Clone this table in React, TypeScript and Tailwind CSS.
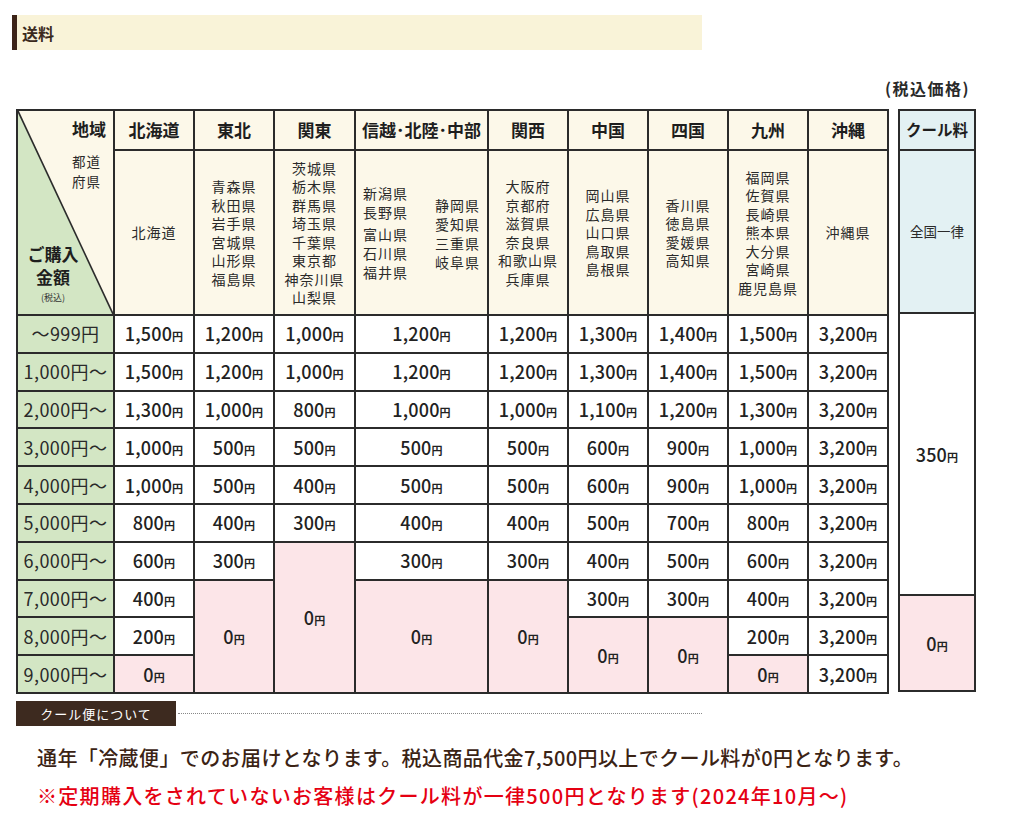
import React from 'react'

type Seg = { v: string; span?: number; pink?: boolean }

const rowLabels = ['～999円', '1,000円～', '2,000円～', '3,000円～', '4,000円～', '5,000円～', '6,000円～', '7,000円～', '8,000円～', '9,000円～']

const regions = ['北海道', '東北', '関東', '信越･北陸･中部', '関西', '中国', '四国', '九州', '沖縄']

const colWidths = ['w-[80px]', 'w-[80px]', 'w-[81px]', 'w-[133px]', 'w-[80px]', 'w-[80px]', 'w-[80px]', 'w-[80px]', 'w-[80px]']

const s = (list: string[]): Seg[] => list.map((v) => ({ v }))

const prices: Seg[][] = [
    [...s(['1,500', '1,500', '1,300', '1,000', '1,000', '800', '600', '400', '200']), { v: '0', pink: true }],
    [...s(['1,200', '1,200', '1,000', '500', '500', '400', '300']), { v: '0', span: 3, pink: true }],
    [...s(['1,000', '1,000', '800', '500', '400', '300']), { v: '0', span: 4, pink: true }],
    [...s(['1,200', '1,200', '1,000', '500', '500', '400', '300']), { v: '0', span: 3, pink: true }],
    [...s(['1,200', '1,200', '1,000', '500', '500', '400', '300']), { v: '0', span: 3, pink: true }],
    [...s(['1,300', '1,300', '1,100', '600', '600', '500', '400', '300']), { v: '0', span: 2, pink: true }],
    [...s(['1,400', '1,400', '1,200', '900', '900', '700', '500', '300']), { v: '0', span: 2, pink: true }],
    [...s(['1,500', '1,500', '1,300', '1,000', '1,000', '800', '600', '400', '200']), { v: '0', pink: true }],
    s(['3,200', '3,200', '3,200', '3,200', '3,200', '3,200', '3,200', '3,200', '3,200', '3,200']),
]

// which segment starts on each row, per column
const startsAt = prices.map((col) => {
    const m: Record<number, Seg> = {}
    let r = 0
    col.forEach((seg) => {
        m[r] = seg
        r += seg.span || 1
    })
    return m
})

const Yen = ({ v }: { v: string }) => (
    <span className="text-[18px] font-medium text-[#222] tracking-[0.2px]">
        {v}<span className="text-[11px] font-bold">円</span>
    </span>
)

const List = ({ items }: { items: string[] }) => (
    <div className="flex flex-col items-center text-[14px] leading-[18.5px] text-[#2a2a2a] tracking-[1px]">
        {items.map((t) => <span key={t}>{t}</span>)}
    </div>
)

const cell = 'border-2 border-[#2b2b2b] text-center align-middle p-0'
const head = 'border-2 border-[#2b2b2b] bg-[#fcf8e9] text-[17px] font-bold text-[#1e1e1e] text-center align-middle p-0 h-[40px]'
const pref = 'border-2 border-[#2b2b2b] bg-[#fcf8e9] text-center align-middle p-0'

export default function App() {
    return (
        <div className="w-[1024px] h-[821px] bg-white font-['Noto_Sans_CJK_JP',sans-serif] text-[#222] pt-[15px]">
            <div className="ml-[12px] w-[690px] h-[35px] flex items-center bg-[#f9f3d8] border-l-[5px] border-[#3d2418] pl-[5px]">
                <span className="text-[16px] font-bold text-[#3b2a1d]">送料</span>
            </div>

            <div className="w-[970px] mt-[28px] text-right text-[16px] font-bold text-[#2a2a2a] leading-[20px] tracking-[1.5px]">(税込価格)</div>

            <div className="flex items-start ml-[16px] mt-[11px]">
                <table className="border-collapse table-fixed w-[871px]">
                    <colgroup>
                        <col className="w-[97px]" />
                        {colWidths.map((w, i) => <col key={i} className={w} />)}
                    </colgroup>
                    <tbody>
                        <tr>
                            <td rowSpan={2} className="border-2 border-[#2b2b2b] p-0 relative bg-[#fcf8e9]">
                                <svg className="absolute inset-0 w-full h-full" viewBox="0 0 100 100" preserveAspectRatio="none">
                                    <polygon points="0,0 100,100 0,100" fill="#d3e6c4" />
                                    <line x1="0" y1="0" x2="100" y2="100" stroke="#2b2b2b" strokeWidth="1.6" vectorEffect="non-scaling-stroke" />
                                </svg>
                                <div className="relative flex flex-col h-[203px] pt-[6px] pb-[10px] px-[6px]">
                                    <span className="self-end text-[17px] font-bold text-[#1e1e1e] leading-[24px] pr-[1px]">地域</span>
                                    <div className="self-end flex flex-col text-[13.5px] leading-[19.5px] text-[#2a2a2a] mt-[11px] pr-[6px] tracking-[1px]">
                                        <span>都道</span>
                                        <span>府県</span>
                                    </div>
                                    <div className="flex-1" />
                                    <div className="flex flex-col items-center w-[58px] text-[17px] font-bold text-[#1e1e1e] leading-[23px]">
                                        <span>ご購入</span>
                                        <span>金額</span>
                                    </div>
                                    <span className="text-[9px] text-[#333] leading-[12px] w-[58px] text-center mt-[4px]">(税込)</span>
                                </div>
                            </td>
                            {regions.map((r) => (
                                <th key={r} className={head}>{r}</th>
                            ))}
                        </tr>
                        <tr className="h-[163px]">
                            <td className={pref}><List items={['北海道']} /></td>
                            <td className={pref}><List items={['青森県', '秋田県', '岩手県', '宮城県', '山形県', '福島県']} /></td>
                            <td className={pref}><List items={['茨城県', '栃木県', '群馬県', '埼玉県', '千葉県', '東京都', '神奈川県', '山梨県']} /></td>
                            <td className={pref}>
                                <div className="flex justify-between px-[7px] text-[14px] leading-[19px] text-[#2a2a2a] tracking-[1px]">
                                    <div className="flex flex-col">
                                        <span>新潟県</span>
                                        <span>長野県</span>
                                        <span className="mt-[3px]">富山県</span>
                                        <span>石川県</span>
                                        <span>福井県</span>
                                    </div>
                                    <div className="flex flex-col pt-[12px]">
                                        <span>静岡県</span>
                                        <span>愛知県</span>
                                        <span>三重県</span>
                                        <span>岐阜県</span>
                                    </div>
                                </div>
                            </td>
                            <td className={pref}><List items={['大阪府', '京都府', '滋賀県', '奈良県', '和歌山県', '兵庫県']} /></td>
                            <td className={pref}><List items={['岡山県', '広島県', '山口県', '鳥取県', '島根県']} /></td>
                            <td className={pref}><List items={['香川県', '徳島県', '愛媛県', '高知県']} /></td>
                            <td className={pref}><List items={['福岡県', '佐賀県', '長崎県', '熊本県', '大分県', '宮崎県', '鹿児島県']} /></td>
                            <td className={pref}><List items={['沖縄県']} /></td>
                        </tr>
                        {rowLabels.map((label, r) => (
                            <tr key={label} className="h-[37.8px]">
                                <td className="border-2 border-[#2b2b2b] bg-[#d3e6c4] text-center align-middle p-0 text-[18px] text-[#2a2a2a] whitespace-nowrap tracking-[0.4px]">{label}</td>
                                {startsAt.map((m, c) => {
                                    const seg = m[r]
                                    if (!seg) return null
                                    return (
                                        <td key={c} rowSpan={seg.span || 1} className={`${cell} ${seg.pink ? 'bg-[#fce5e8]' : 'bg-white'}`}>
                                            <Yen v={seg.v} />
                                        </td>
                                    )
                                })}
                            </tr>
                        ))}
                    </tbody>
                </table>

                <table className="border-collapse table-fixed w-[78px] ml-[9px]">
                    <tbody>
                        <tr><th className="border-2 border-[#2b2b2b] bg-[#e3f1f3] text-[15.5px] font-bold text-[#1e1e1e] text-center p-0 h-[40px] whitespace-nowrap">クール料</th></tr>
                        <tr className="h-[163px]"><td className="border-2 border-[#2b2b2b] bg-[#e3f1f3] text-center text-[13.5px] text-[#2a2a2a] p-0">全国一律</td></tr>
                        <tr className="h-[282px]"><td className={`${cell} bg-white`}><Yen v="350" /></td></tr>
                        <tr className="h-[96px]"><td className={`${cell} bg-[#fce5e8]`}><Yen v="0" /></td></tr>
                    </tbody>
                </table>
            </div>

            <div className="flex items-center ml-[16px] mt-[7px] w-[686px]">
                <div className="bg-[#3d2a1f] text-white text-[13px] h-[25px] w-[160px] flex items-center justify-center tracking-[1px]">クール便について</div>
                <div className="flex-1 border-t border-dotted border-[#888] ml-[2px]" />
            </div>

            <div className="ml-[37px] mt-[20px] text-[20px] leading-[24px] font-medium text-[#3b2314] tracking-[0.4px] whitespace-nowrap">
                通年「冷蔵便」でのお届けとなります。税込商品代金7,500円以上でクール料が0円となります。
            </div>
            <div className="ml-[37px] mt-[14px] text-[20px] leading-[24px] font-medium text-[#e50012] tracking-[1.3px] whitespace-nowrap">
                ※定期購入をされていないお客様はクール料が一律500円となります(2024年10月～)
            </div>
        </div>
    )
}
